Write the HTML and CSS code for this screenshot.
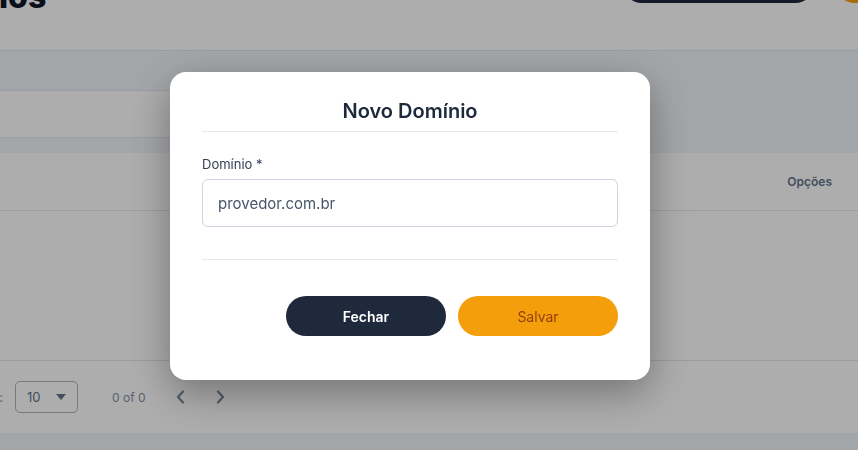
FILE: index.html
```html
<!DOCTYPE html>
<html lang="pt-BR">
<head>
<meta charset="utf-8">
<title>Domínios</title>
<link rel="stylesheet" href="styles.css">
</head>
<body>
<div class="page">
  <header class="top">
    <h1 class="title">Domínios</h1>
    <div class="top-actions">
      <button class="btn-new">Novo Domínio</button>
      <span class="avatar"></span>
    </div>
  </header>
  <main class="content">
    <div class="filter-card">
      <span class="filter-text">Pesquisar</span>
    </div>
    <section class="table-card">
      <div class="thead">
        <span class="th th-main">Domínio</span>
        <span class="th">Opções</span>
      </div>
      <div class="tbody"></div>
      <div class="pager">
        <span class="pager-label"><span>Linhas por página:</span></span>
        <span class="select">10
          <svg class="caret" width="10" height="6" viewBox="0 0 10 6"><path d="M0 0h10L5 6z" fill="currentColor"/></svg>
        </span>
        <span class="count">0 of 0</span>
        <svg class="chev" width="12" height="14" viewBox="0 0 12 14"><path d="M8 1.5L3 7l5 5.5" fill="none" stroke="currentColor" stroke-width="2.2" stroke-linecap="round" stroke-linejoin="round"/></svg>
        <svg class="chev" width="12" height="14" viewBox="0 0 12 14"><path d="M4 1.5L9 7l-5 5.5" fill="none" stroke="currentColor" stroke-width="2.2" stroke-linecap="round" stroke-linejoin="round"/></svg>
      </div>
    </section>
  </main>
</div>

<div class="overlay">
  <div class="modal">
    <h2 class="modal-title">Novo Domínio</h2>
    <label class="field-label" for="dom">Domínio *</label>
    <input id="dom" class="field-input" type="text" value="provedor.com.br">
    <div class="modal-divider"></div>
    <div class="modal-actions">
      <button class="btn btn-dark">Fechar</button>
      <button class="btn btn-amber">Salvar</button>
    </div>
  </div>
</div>
</body>
</html>
```

FILE: styles.css
```css
* { box-sizing: border-box; }

html, body {
  margin: 0;
  height: 100%;
  overflow: hidden;
  background: #f1f5f9;
  font-family: Inter, "Noto Sans", sans-serif;
}

.page {
  margin-left: -103px;
  width: 961px;
}

.top {
  height: 91px;
  margin-top: -40px;
  background: #ffffff;
  border-bottom: 1px solid #e2e8f0;
  display: flex;
  justify-content: space-between;
  align-items: flex-start;
}

.title {
  margin: 17px 0 0;
  font-size: 32px;
  line-height: 40px;
  font-weight: 800;
  color: #0f172a;
}

.top-actions {
  display: flex;
  align-items: flex-start;
  gap: 20px;
  padding-top: 3px;
  margin-right: -17px;
}

.btn-new {
  width: 193px;
  height: 40px;
  border: 0;
  border-radius: 20px;
  background: #1e293b;
  color: #ffffff;
  font: 600 14px Inter, sans-serif;
}

.avatar {
  width: 40px;
  height: 40px;
  border-radius: 50%;
  background: #f59e0b;
}

.content {
  padding-top: 39px;
}

.filter-card {
  width: 480px;
  height: 48px;
  background: #ffffff;
  border-top: 1px solid #e2e8f0;
  border-bottom: 1px solid #e2e8f0;
  margin-bottom: 15px;
}

.filter-text { display: none; }

.table-card {
  background: #ffffff;
}

.thead {
  height: 58px;
  display: flex;
  align-items: center;
  justify-content: space-between;
  padding: 0 26px 0 24px;
  border-bottom: 1px solid #e2e8f0;
}

.th {
  font-size: 12px;
  font-weight: 600;
  color: #64748b;
}

.th-main { visibility: hidden; }

.tbody {
  height: 150px;
  border-bottom: 1px solid #e2e8f0;
}

.pager {
  height: 72px;
  display: flex;
  align-items: center;
  color: #8591a3;
  font-size: 13px;
}

.pager-label {
  width: 106px;
  display: flex;
  justify-content: flex-end;
  white-space: nowrap;
  overflow: hidden;
}

.pager-label span { flex: none; }

.select {
  margin-left: 12px;
  width: 63px;
  height: 32px;
  border: 1px solid #a8b3c2;
  border-radius: 5px;
  display: flex;
  align-items: center;
  justify-content: space-between;
  padding: 0 11px 0 11px;
  color: #64748b;
}

.caret { color: #64748b; }

.count {
  margin-left: 34px;
  font-size: 12px;
  color: #8591a3;
}

.chev {
  color: #7d899b;
  margin-left: 29px;
}

.chev + .chev { margin-left: 27px; }

/* overlay + modal */
.overlay {
  position: fixed;
  inset: 0;
  background: rgba(0, 0, 0, 0.32);
  display: flex;
  align-items: center;
  justify-content: center;
  padding-right: 38px;
  padding-top: 2px;
}

.modal {
  width: 480px;
  height: 308px;
  background: #ffffff;
  border-radius: 16px;
  padding: 25px 32px 0;
  display: flex;
  flex-direction: column;
  box-shadow: 0 12px 40px rgba(0, 0, 0, 0.35);
}

.modal-title {
  margin: 0;
  font-size: 20px;
  line-height: 28px;
  font-weight: 600;
  color: #1e293b;
  text-align: center;
  padding-bottom: 6px;
  border-bottom: 1px solid #e2e8f0;
}

.field-label {
  margin-top: 22px;
  font-size: 13px;
  line-height: 20px;
  color: #334155;
}

.field-input {
  margin-top: 5px;
  height: 48px;
  border: 1px solid #cbd5e1;
  border-radius: 6px;
  padding: 0 15px;
  font: 400 15px Inter, sans-serif;
  color: #475569;
  outline: none;
}

.modal-divider {
  margin-top: 32px;
  border-top: 1px solid #e2e8f0;
}

.modal-actions {
  margin-top: 36px;
  display: flex;
  justify-content: flex-end;
  gap: 12px;
}

.btn {
  width: 160px;
  height: 40px;
  border: 0;
  border-radius: 20px;
  font-family: Inter, sans-serif;
  font-size: 14px;
}

.btn-dark {
  background: #1e293b;
  color: #ffffff;
  font-weight: 600;
}

.btn-amber {
  background: #f59e0b;
  color: #92400e;
  font-weight: 400;
}
```
